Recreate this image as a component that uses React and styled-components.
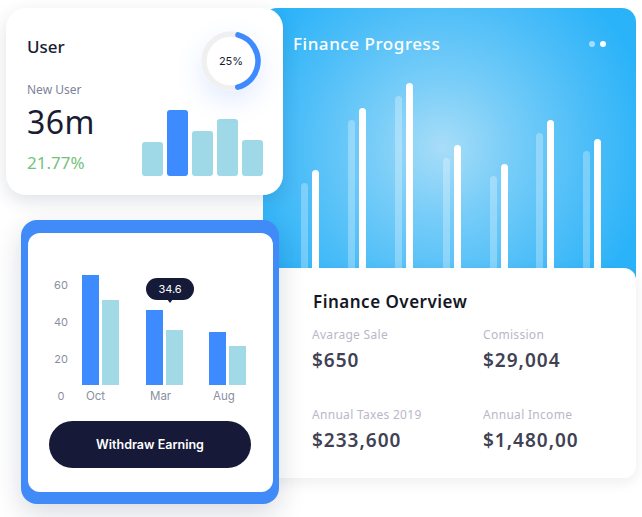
import React from "react";
import styled, { createGlobalStyle } from "styled-components";

const Global = createGlobalStyle`
  html, body { margin: 0; padding: 0; background: #ffffff; }
  body { font-family: "Noto Sans", "Open Sans", sans-serif; -webkit-font-smoothing: antialiased; }
  * { box-sizing: border-box; }
`;

const Canvas = styled.div`
  position: relative;
  width: 642px;
  height: 517px;
  overflow: hidden;
  background: #fff;
`;

/* ---------- Finance progress (blue) ---------- */
const ProgressCard = styled.section`
  position: absolute;
  left: 263px;
  top: 8px;
  width: 373px;
  height: 290px;
  border-radius: 14px;
  background: radial-gradient(circle at 48% 48%, #a8ddf8 0%, #78cdf8 28%, #4bbdf8 60%, #2bb3f9 85%);
  display: flex;
  flex-direction: column;
  overflow: hidden;
`;

const ProgressHeader = styled.div`
  display: flex;
  align-items: flex-start;
  justify-content: space-between;
  padding: 24px 30px 0 30px;
  height: 60px;
`;

const ProgressTitle = styled.h2`
  margin: 0;
  font-size: 17px;
  line-height: 24px;
  font-weight: 500;
  letter-spacing: 0.55px;
  color: #ffffff;
`;

const Dots = styled.div`
  display: flex;
  gap: 5px;
  margin-top: 9px;
`;

const Dot = styled.span`
  width: 6px;
  height: 6px;
  border-radius: 50%;
  background: ${(p) => (p.$dim ? "rgba(255,255,255,0.55)" : "#ffffff")};
`;

const progressPairs = [
  { x: 38, faint: 175, bright: 162 },
  { x: 85, faint: 112, bright: 100 },
  { x: 132, faint: 88, bright: 75 },
  { x: 180, faint: 150, bright: 137 },
  { x: 227, faint: 168, bright: 156 },
  { x: 273, faint: 125, bright: 112 },
  { x: 320, faint: 143, bright: 131 },
];

function ProgressBars() {
  return (
    <svg width="373" height="230" viewBox="0 60 373 230" style={{ display: "block" }}>
      {progressPairs.map((p, i) => (
        <g key={i}>
          <rect x={p.x} y={p.faint} width="7" height={300 - p.faint} rx="3.5" fill="rgba(255,255,255,0.28)" />
          <rect x={p.x + 11} y={p.bright} width="7" height={300 - p.bright} rx="3.5" fill="#ffffff" />
        </g>
      ))}
    </svg>
  );
}

/* ---------- User card ---------- */
const UserCard = styled.section`
  position: absolute;
  left: 6px;
  top: 8px;
  width: 277px;
  height: 187px;
  border-radius: 20px;
  background: #ffffff;
  box-shadow: 0 6px 18px rgba(30, 40, 80, 0.14);
  display: flex;
  justify-content: space-between;
  padding: 20px 20px 19px 21px;
  z-index: 2;
`;

const UserInfo = styled.div`
  display: flex;
  flex-direction: column;
`;

const CardTitle = styled.h3`
  margin: 7px 0 0 0;
  font-size: 17px;
  line-height: 24px;
  font-weight: 500;
  color: #181c32;
`;

const SmallLabel = styled.div`
  margin-top: 23px;
  font-size: 12px;
  line-height: 16px;
  color: #7e8299;
`;

const BigNumber = styled.div`
  margin-top: 4px;
  font-size: 32px;
  line-height: 40px;
  font-weight: 400;
  letter-spacing: 0.4px;
  color: #181c32;
`;

const Growth = styled.div`
  margin-top: 9px;
  font-size: 17px;
  line-height: 24px;
  color: #74c27c;
`;

const UserVisuals = styled.div`
  display: flex;
  flex-direction: column;
  align-items: flex-end;
  justify-content: space-between;
`;

const DonutWrap = styled.div`
  position: relative;
  width: 60px;
  height: 60px;
  margin-top: 3px;
  margin-right: 2px;
  border-radius: 50%;
  box-shadow: 0 10px 26px rgba(70, 130, 255, 0.16);
  display: flex;
  align-items: center;
  justify-content: center;
`;

const DonutLabel = styled.span`
  position: absolute;
  font-family: "Inter", sans-serif;
  font-size: 11px;
  color: #181c32;
`;

function Donut() {
  const r = 27;
  const c = 2 * Math.PI * r;
  const arc = (150 / 360) * c;
  return (
    <DonutWrap>
      <svg width="60" height="60" viewBox="0 0 60 60">
        <circle cx="30" cy="30" r={r} fill="#fff" stroke="#f0f0f0" strokeWidth="5.5" />
        <circle
          cx="30"
          cy="30"
          r={r}
          fill="none"
          stroke="#3d8bff"
          strokeWidth="5.5"
          strokeLinecap="round"
          strokeDasharray={`${arc} ${c}`}
          transform="rotate(-75 30 30)"
        />
      </svg>
      <DonutLabel>25%</DonutLabel>
    </DonutWrap>
  );
}

const MiniBars = styled.div`
  display: flex;
  align-items: flex-end;
  gap: 4px;
`;

const MiniBar = styled.div`
  width: 21px;
  border-radius: 3px;
  background: ${(p) => (p.$active ? "#3d8bff" : "#9fd8e6")};
`;

const miniData = [34, 66, 45, 57, 36];

/* ---------- Overview card ---------- */
const OverviewCard = styled.section`
  position: absolute;
  left: 263px;
  top: 268px;
  width: 373px;
  height: 210px;
  border-radius: 12px;
  background: #ffffff;
  box-shadow: 0 4px 14px rgba(20, 30, 60, 0.08);
  padding: 22px 0 0 49px;
  z-index: 1;
`;

const OverviewTitle = styled.h3`
  margin: 0 0 0 1px;
  font-size: 17px;
  line-height: 24px;
  font-weight: 600;
  letter-spacing: 0.5px;
  color: #141726;
`;

const StatGrid = styled.div`
  margin-top: 13px;
  display: grid;
  grid-template-columns: 171px 150px;
  row-gap: 34px;
`;

const Stat = styled.div`
  display: flex;
  flex-direction: column;
  gap: 4px;
`;

const StatLabel = styled.div`
  font-size: 12px;
  line-height: 16px;
  letter-spacing: 0.3px;
  color: #b8b8c8;
`;

const StatValue = styled.div`
  font-size: 19px;
  line-height: 26px;
  font-weight: 600;
  letter-spacing: 1px;
  color: #3f4254;
`;

/* ---------- Withdraw card ---------- */
const WithdrawFrame = styled.section`
  position: absolute;
  left: 21px;
  top: 220px;
  width: 258px;
  height: 284px;
  padding: 13px 6px 12px 7px;
  border-radius: 16px;
  background: #418bf9;
  box-shadow: 0 10px 28px rgba(20, 30, 60, 0.16);
  z-index: 3;
`;

const WithdrawInner = styled.div`
  width: 100%;
  height: 100%;
  border-radius: 12px;
  background: #ffffff;
  padding: 44px 0 0 26px;
  display: flex;
  flex-direction: column;
  font-family: "Inter", sans-serif;
`;

const Chart = styled.div`
  position: relative;
  display: flex;
  align-items: flex-end;
  height: 126px;
`;

const YAxis = styled.div`
  width: 14px;
  display: flex;
  flex-direction: column;
  gap: 23px;
  margin-right: 14px;
`;

const AxisText = styled.span`
  display: block;
  font-size: 11px;
  line-height: 14px;
  color: #8a8ea3;
  text-align: center;
`;

const Group = styled.div`
  display: flex;
  flex-direction: column;
  align-items: flex-start;
  margin-right: ${(p) => p.$gap}px;
`;

const GroupBars = styled.div`
  display: flex;
  align-items: flex-end;
  gap: 3px;
  margin-bottom: 4px;
`;

const GroupLabel = styled(AxisText)`
  margin-left: 4px;
  font-size: 11.5px;
`;

const Bar = styled.div`
  width: 17px;
  background: ${(p) => (p.$light ? "#a1d9e6" : "#3d8bff")};
`;

const Tooltip = styled.div`
  position: absolute;
  left: 92px;
  top: 1px;
  width: 48px;
  height: 22px;
  border-radius: 11px;
  background: #141a38;
  color: #ffffff;
  font-size: 11px;
  line-height: 22px;
  text-align: center;
  &::after {
    content: "";
    position: absolute;
    left: 21px;
    bottom: -3px;
    border-left: 3.5px solid transparent;
    border-right: 3.5px solid transparent;
    border-top: 4px solid #141a38;
  }
`;

const Button = styled.button`
  margin: 18px 0 0 -5px;
  width: 202px;
  height: 47px;
  border: none;
  border-radius: 24px;
  background: #161a38;
  color: #ffffff;
  font-family: "Inter", sans-serif;
  font-size: 12.5px;
  font-weight: 600;
  cursor: pointer;
`;

const groups = [
  { label: "Oct", a: 110, b: 85, gap: 27 },
  { label: "Mar", a: 75, b: 55, gap: 26 },
  { label: "Aug", a: 53, b: 39, gap: 0 },
];

export default function App() {
  return (
    <>
      <Global />
      <Canvas>
        <ProgressCard>
          <ProgressHeader>
            <ProgressTitle>Finance Progress</ProgressTitle>
            <Dots>
              <Dot $dim />
              <Dot />
            </Dots>
          </ProgressHeader>
          <ProgressBars />
        </ProgressCard>

        <UserCard>
          <UserInfo>
            <CardTitle>User</CardTitle>
            <SmallLabel>New User</SmallLabel>
            <BigNumber>36m</BigNumber>
            <Growth>21.77%</Growth>
          </UserInfo>
          <UserVisuals>
            <Donut />
            <MiniBars>
              {miniData.map((h, i) => (
                <MiniBar key={i} $active={i === 1} style={{ height: h }} />
              ))}
            </MiniBars>
          </UserVisuals>
        </UserCard>

        <OverviewCard>
          <OverviewTitle>Finance Overview</OverviewTitle>
          <StatGrid>
            <Stat>
              <StatLabel>Avarage Sale</StatLabel>
              <StatValue>$650</StatValue>
            </Stat>
            <Stat>
              <StatLabel>Comission</StatLabel>
              <StatValue>$29,004</StatValue>
            </Stat>
            <Stat>
              <StatLabel>Annual Taxes 2019</StatLabel>
              <StatValue>$233,600</StatValue>
            </Stat>
            <Stat>
              <StatLabel>Annual Income</StatLabel>
              <StatValue>$1,480,00</StatValue>
            </Stat>
          </StatGrid>
        </OverviewCard>

        <WithdrawFrame>
          <WithdrawInner>
            <Chart>
              <YAxis>
                <AxisText>60</AxisText>
                <AxisText>40</AxisText>
                <AxisText>20</AxisText>
                <AxisText>0</AxisText>
              </YAxis>
              {groups.map((g) => (
                <Group key={g.label} $gap={g.gap}>
                  <GroupBars>
                    <Bar style={{ height: g.a }} />
                    <Bar $light style={{ height: g.b }} />
                  </GroupBars>
                  <GroupLabel>{g.label}</GroupLabel>
                </Group>
              ))}
              <Tooltip>34.6</Tooltip>
            </Chart>
            <Button>Withdraw Earning</Button>
          </WithdrawInner>
        </WithdrawFrame>
      </Canvas>
    </>
  );
}
